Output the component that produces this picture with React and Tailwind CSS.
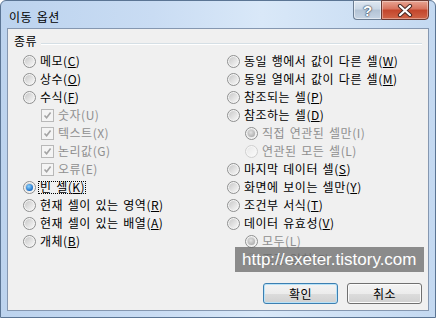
import React from "react";

const LEFT = [
  { t: "메모", k: "C" },
  { t: "상수", k: "O" },
  { t: "수식", k: "F" },
  { t: "숫자", k: "U", type: "check", checked: true, disabled: true, indent: true },
  { t: "텍스트", k: "X", type: "check", checked: true, disabled: true, indent: true },
  { t: "논리값", k: "G", type: "check", checked: true, disabled: true, indent: true },
  { t: "오류", k: "E", type: "check", checked: true, disabled: true, indent: true },
  { t: "빈 셀", k: "K", checked: true, focus: true },
  { t: "현재 셀이 있는 영역", k: "R" },
  { t: "현재 셀이 있는 배열", k: "A" },
  { t: "개체", k: "B" },
];

const RIGHT = [
  { t: "동일 행에서 값이 다른 셀", k: "W" },
  { t: "동일 열에서 값이 다른 셀", k: "M" },
  { t: "참조되는 셀", k: "P" },
  { t: "참조하는 셀", k: "D" },
  { t: "직접 연관된 셀만", k: "I", checked: true, disabled: true, indent: true },
  { t: "연관된 모든 셀", k: "L", disabled: true, indent: true },
  { t: "마지막 데이터 셀", k: "S" },
  { t: "화면에 보이는 셀만", k: "Y" },
  { t: "조건부 서식", k: "T" },
  { t: "데이터 유효성", k: "V" },
  { t: "모두", k: "L", checked: true, disabled: true, indent: true },
  { t: "조건 일치", k: "E", disabled: true, indent: true },
];

function Radio({ checked, disabled }) {
  return (
    <span
      className={`flex h-[13px] w-[13px] shrink-0 items-center justify-center rounded-full border ${
        disabled && !checked ? "border-[#cfcfcf] bg-[#f6f6f6]" : "border-[#8e8f8f] bg-[#f4f4f4]"
      }`}
    >
      <span
        className={`flex h-[9px] w-[9px] items-center justify-center rounded-full ${
          disabled && !checked
            ? "bg-[linear-gradient(135deg,#e8e8e8,#fafafa)]"
            : "bg-[linear-gradient(135deg,#c9c9c9,#f7f7f7)]"
        }`}
      >
        {checked && (
          <span
            className={`h-[7px] w-[7px] rounded-full ${
              disabled
                ? "bg-[radial-gradient(circle_at_40%_35%,#e2e2e2,#9d9d9d)]"
                : "bg-[radial-gradient(circle_at_40%_35%,#8fd4ff,#1a6fc9_70%,#104f9c)]"
            }`}
          />
        )}
      </span>
    </span>
  );
}

function Check() {
  return (
    <span className="flex h-[13px] w-[13px] shrink-0 items-center justify-center border border-[#b8b8b8] bg-[#f4f4f4]">
      <svg width="9" height="9" viewBox="0 0 9 9">
        <path d="M1.5 4.5 L3.6 6.8 L7.6 1.6" fill="none" stroke="#a3a3a3" strokeWidth="1.6" />
      </svg>
    </span>
  );
}

function Opt({ o }) {
  const label = (
    <>
      {o.t}(
      {o.disabled ? o.k : <span className="underline underline-offset-[1px]">{o.k}</span>})
    </>
  );
  return (
    <div className={`flex h-[18px] items-center gap-[4px] ${o.indent ? "pl-[18px]" : ""}`}>
      {o.type === "check" ? <Check /> : <Radio checked={o.checked} disabled={o.disabled} />}
      {o.focus ? (
        <span className="-ml-[2px] flex h-[13px] items-center whitespace-nowrap border border-dotted border-black pl-px">
          {label}
        </span>
      ) : (
        <span className={`whitespace-nowrap ${o.disabled ? "text-[#8f8f8f]" : "text-black"}`}>{label}</span>
      )}
    </div>
  );
}

export default function App() {
  return (
    <div className="h-[318px] w-[436px] bg-white">
      <div className="relative flex h-full w-full flex-col rounded-t-[6px] border border-[#5b7594] bg-[linear-gradient(90deg,#bcd3ee_0%,#c9dcf3_35%,#d9e8f8_60%,#c4d9f1_100%)] px-[6px] pb-[6px] font-['Noto_Sans_CJK_KR','Noto_Sans',sans-serif] text-[12px] leading-[14px] tracking-[0.5px] [word-spacing:1.5px]">
        {/* title bar */}
        <div className="flex h-[27px] shrink-0 items-start justify-between">
          <span className="mt-[9px] pl-[2px] text-black">이동 옵션</span>
          <div className="-mt-px flex">
            <div className="flex h-[20px] w-[28px] items-center justify-center rounded-bl-[4px] border border-r-0 border-[#6b7d92] bg-[linear-gradient(180deg,#dfe8f2_0%,#cad7e5_45%,#b3c3d5_50%,#c6d4e3_100%)] shadow-[inset_0_0_0_1px_rgba(255,255,255,0.5)]">
              <span className="font-['Liberation_Sans',sans-serif] text-[15px] font-bold leading-none tracking-normal text-white [text-shadow:0_0_1px_#3a4a5e,0_0_1px_#3a4a5e,0_0_2px_#3a4a5e]">
                ?
              </span>
            </div>
            <div className="flex h-[20px] w-[48px] items-center justify-center rounded-br-[4px] border border-[#6b3a32] bg-[linear-gradient(180deg,#e8a593_0%,#d7725c_45%,#c3452b_50%,#d06447_100%)] shadow-[inset_0_0_0_1px_rgba(255,255,255,0.35)]">
              <svg width="16" height="13" viewBox="0 0 16 13">
                <path d="M3 2 L13 11 M13 2 L3 11" stroke="#4a2a24" strokeWidth="4.2" strokeLinecap="round" />
                <path d="M3 2 L13 11 M13 2 L3 11" stroke="#ffffff" strokeWidth="2.2" strokeLinecap="round" />
              </svg>
            </div>
          </div>
        </div>

        {/* client area */}
        <div className="flex flex-1 flex-col border border-[#8597b0] bg-[#f0f0f0]">
          <div className="mt-[4px] flex h-[16px] items-start">
            <span className="pl-[6px] leading-[16px] text-black">종류</span>
            <div className="ml-[4px] mr-[6px] mt-[10px] h-[2px] flex-1 border-t border-b border-[#d5dfe5] border-b-white" />
          </div>

          <div className="mt-[3px] grid grid-cols-[204px_1fr] pl-[15px]">
            <div className="flex flex-col">
              {LEFT.map((o, i) => (
                <Opt key={i} o={o} />
              ))}
            </div>
            <div className="flex flex-col">
              {RIGHT.map((o, i) => (
                <Opt key={i} o={o} />
              ))}
            </div>
          </div>

          <div className="mt-[15px] flex justify-end gap-[9px] pr-[6px]">
            <button className="flex h-[21px] w-[75px] items-center justify-center rounded-[3px] border border-[#3c7fb1] bg-[linear-gradient(180deg,#f3f3f3_0%,#ececec_50%,#dddddd_50%,#d0d0d0_100%)] pt-px text-black shadow-[inset_0_0_0_1px_#b8e2f8]">
              확인
            </button>
            <button className="flex h-[21px] w-[75px] items-center justify-center rounded-[3px] border border-[#707070] bg-[linear-gradient(180deg,#f3f3f3_0%,#ececec_50%,#dddddd_50%,#d0d0d0_100%)] pt-px text-black shadow-[inset_0_0_0_1px_#fbfbfb]">
              취소
            </button>
          </div>
        </div>

        {/* watermark */}
        <div className="absolute left-[234px] top-[246px] flex h-[25px] w-[189px] items-center bg-[rgba(100,100,100,0.72)] pl-[7px] font-['Liberation_Sans',sans-serif] text-[17px] leading-none tracking-normal text-white [word-spacing:normal]">
          http://exeter.tistory.com
        </div>
      </div>
    </div>
  );
}
